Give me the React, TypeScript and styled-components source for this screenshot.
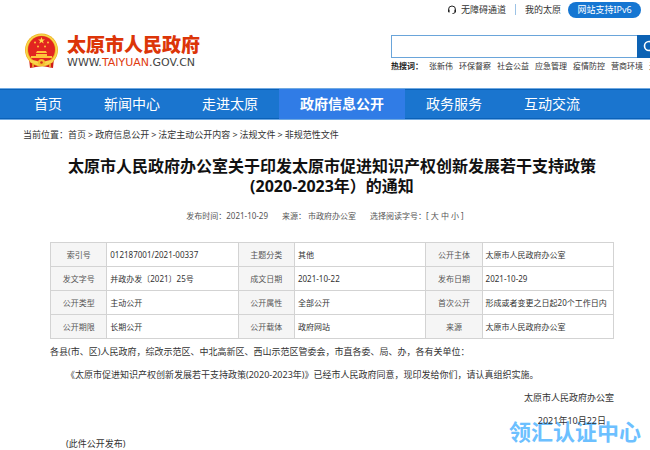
import React from "react";
import styled, { createGlobalStyle } from "styled-components";

const Global = createGlobalStyle`
  * { box-sizing: border-box; }
  body {
    margin: 0;
    background: #fff;
    color: #333;
    font-family: "Noto Sans", "Noto Sans CJK SC", sans-serif;
    font-size: 9px;
    overflow: hidden;
  }
  a { color: inherit; text-decoration: none; }
`;

const Page = styled.div`
  position: relative;
  isolation: isolate;
  overflow: hidden;
  min-height: 100vh;
`;

const TopBar = styled.div`
  display: flex;
  justify-content: flex-end;
  align-items: center;
  height: 18px;
  padding: 1px 9px 0 0;
`;

const TopLink = styled.a`
  display: flex;
  align-items: center;
  gap: 4px;
  line-height: 16px;
`;

const Divider = styled.span`
  width: 1px;
  height: 11px;
  margin: 0 9px;
  background: #9cc3e6;
`;

const Pill = styled.a`
  margin-left: 7px;
  width: 73px;
  border-radius: 8px;
  background: #1576d2;
  text-align: center;
  line-height: 16px;
  && { color: #fff; }
`;

const Header = styled.header`
  display: flex;
  justify-content: space-between;
  height: 70px;
  padding: 15px 0 0 23px;
`;

const Brand = styled.a`
  display: flex;
  align-items: flex-start;
  gap: 7px;
`;

const BrandName = styled.div`
  color: #dc3508;
  font-size: 19px;
  font-weight: 900;
  line-height: 24px;
  white-space: nowrap;
`;

const BrandUrl = styled.div`
  color: #444;
  font-family: "DejaVu Sans", sans-serif;
  font-size: 11px;
  line-height: 11px;
`;

const Red = styled.span`
  color: #e03a10;
`;

const SearchArea = styled.div`
  width: 284px;
  margin: 2px -25px 0 0;
  flex: none;
`;

const SearchForm = styled.form`
  display: flex;
  height: 23px;
`;

const SearchInput = styled.input`
  flex: 1;
  min-width: 0;
  padding: 0 8px;
  border: 1px solid #6aa5da;
  border-right: 0;
  border-radius: 0;
  appearance: none;
  background: #fff;
  outline: 0;
  font: inherit;
`;

const SearchButton = styled.button`
  width: 38px;
  padding: 0 0 0 6px;
  border: 0;
  background: #0c62b4;
  text-align: left;
  line-height: 0;
`;

const HotWords = styled.div`
  display: flex;
  gap: 6px;
  font-size: 8px;
  line-height: 16px;
  white-space: nowrap;
`;

const HotLabel = styled.strong`
  color: #222;
  width: 32px;
`;

const Nav = styled.nav`
  display: flex;
  height: 32px;
  padding-left: 13px;
  border-top: 1px solid #6fa9e2;
  border-bottom: 1px solid #6fa9e2;
  background: #1a75cf;
  box-shadow: inset 0 1px #0a61b8, inset 0 -1px #0a61b8;
`;

const NavLink = styled.a<{ $active?: boolean }>`
  padding: 0 21px;
  font-size: 14px;
  line-height: 30px;
  font-weight: ${(p) => (p.$active ? 700 : 400)};
  background: ${(p) => (p.$active ? "#307ce6" : "transparent")};
  && { color: #fff; }
`;

const Crumbs = styled.nav`
  display: flex;
  padding-left: 23px;
  line-height: 30px;
  white-space: nowrap;
`;

const CrumbArrow = styled.span`
  padding: 0 2px;
`;

const Main = styled.main`
  padding: 6px 36px 0 50px;
`;

const Title = styled.h1`
  margin: 0 -18px;
  color: #111;
  font-size: 16px;
  line-height: 20px;
  text-align: center;
`;

const Meta = styled.div`
  display: flex;
  justify-content: center;
  gap: 14px;
  padding: 12px 14px 0 0;
  color: #555;
  font-size: 8px;
  line-height: 16px;
`;

const SizeButton = styled.button`
  padding: 0;
  border: 0;
  background: none;
  color: inherit;
  font: inherit;
`;

const InfoTable = styled.table`
  width: 100%;
  margin-top: 18px;
  border-collapse: collapse;
  table-layout: fixed;
  font-size: 8px;
  line-height: 16px;
`;

const LabelCell = styled.th`
  width: 10%;
  height: 24px;
  padding: 0;
  border: 1px solid #d3d3d3;
  background: #f5f5f5;
  color: #555;
  font-weight: 400;
`;

const ValueCell = styled.td`
  padding: 0 3px;
  border: 1px solid #d3d3d3;
  white-space: nowrap;
`;

const Article = styled.article`
  padding-top: 1px;
`;

const Paragraph = styled.p<{ $indent?: boolean }>`
  margin: 0;
  padding-left: ${(p) => (p.$indent ? 16 : 0)}px;
  line-height: 23px;
`;

const Signature = styled.p<{ $inset?: boolean }>`
  margin: 0;
  padding-right: ${(p) => (p.$inset ? 8 : 0)}px;
  line-height: 23px;
  text-align: right;
`;

const Watermark = styled.div`
  position: absolute;
  z-index: -1;
  right: 9px;
  top: 417px;
  color: #6cc0ff;
  font-size: 22px;
  font-weight: 700;
  line-height: 28px;
`;

const Emblem = () => (
  <svg width="37" height="36" viewBox="0 0 37 36" aria-hidden="true">
    <path d="M6 25h25l-1 10-11-2-12 2z" fill="#cf1b17" />
    <circle cx="18.500" cy="17" r="16.500" fill="#efb323" />
    <circle cx="18.500" cy="17" r="15" fill="none" stroke="#f8d64c" strokeWidth="1.500" />
    <circle cx="18.500" cy="16.500" r="13.500" fill="#e22420" />
    <path d="m18.500 4 .9 2.500h2.600l-2.100 1.600.8 2.500-2.200-1.500-2.200 1.500.8-2.500L15 6.500h2.600z" fill="#ffd84a" />
    <g fill="#ffc43b">
      <circle cx="12" cy="9.500" r="1" />
      <circle cx="25" cy="9.500" r="1" />
      <circle cx="15" cy="13.500" r="1" />
      <circle cx="22" cy="13.500" r="1" />
      <path d="M14 18h9l1 2h-11zM13 21h11v2h5v2H8v-2h5z" />
    </g>
    <path d="M7 28c4-2 7 1 11.500 1S26 26 30 28l-1 2c-4-1-6 1-10.500 1S12 29 8 30z" fill="#f8d64c" />
    <circle cx="18.500" cy="29.500" r="3.500" fill="#f3bd2d" />
    <circle cx="18.500" cy="29.500" r="1.300" fill="#d92a1b" />
    <path d="M10 31v3M27 31v3" stroke="#f3bd2d" strokeWidth="1.500" />
  </svg>
);

const Headset = () => (
  <svg width="10" height="10" viewBox="0 0 10 10" aria-hidden="true">
    <path d="M1.500 5.500V4.500a3.500 3.500 0 0 1 7 0v1.500c0 1.500-1 2.500-3 2.500" fill="none" stroke="#222" strokeWidth="1" />
    <path d="M1 4.500h1.600v3H1.800L1 6.800zM7.400 4.500H9v2.300l-.8.700h-.8z" fill="#222" />
  </svg>
);

const navItems = ["首页", "新闻中心", "走进太原", "政府信息公开", "政务服务", "互动交流"];
const crumbs = ["首页", "政府信息公开", "法定主动公开内容", "法规文件", "非规范性文件"];
const hotWords = ["张新伟", "环保督察", "社会公益", "应急管理", "疫情防控", "营商环境", "无障碍"];
const rows = [
  [["索引号", "012187001/2021-00337"], ["主题分类", "其他"], ["公开主体", "太原市人民政府办公室"]],
  [["发文字号", "并政办发〔2021〕25号"], ["成文日期", "2021-10-22"], ["发布日期", "2021-10-29"]],
  [["公开类型", "主动公开"], ["公开属性", "全部公开"], ["首次公开", "形成或者变更之日起20个工作日内"]],
  [["公开期限", "长期公开"], ["公开载体", "政府网站"], ["来源", "太原市人民政府办公室"]],
];

export default function App() {
  return (
    <Page>
      <Global />
      <TopBar>
        <TopLink href="#"><Headset />无障碍通道</TopLink>
        <Divider />
        <TopLink href="#">我的太原</TopLink>
        <Pill href="#">网站支持IPv6</Pill>
      </TopBar>
      <Header>
        <Brand href="#">
          <Emblem />
          <div>
            <BrandName>太原市人民政府</BrandName>
            <BrandUrl>WWW.<Red>TAIYUAN</Red>.GOV.CN</BrandUrl>
          </div>
        </Brand>
        <SearchArea>
          <SearchForm onSubmit={(e) => e.preventDefault()}>
            <SearchInput type="search" aria-label="搜索" />
            <SearchButton aria-label="搜索">
              <svg width="14" height="14" viewBox="0 0 14 14">
                <circle cx="6" cy="6" r="4.500" fill="none" stroke="#fff" strokeWidth="1.600" />
                <path d="m9.500 9.500 3.500 3.500" stroke="#fff" strokeWidth="1.600" />
              </svg>
            </SearchButton>
          </SearchForm>
          <HotWords>
            <HotLabel>热搜词：</HotLabel>
            {hotWords.map((w) => <a href="#" key={w}>{w}</a>)}
          </HotWords>
        </SearchArea>
      </Header>
      <Nav>
        {navItems.map((n) => (
          <NavLink href="#" key={n} $active={n === "政府信息公开"}>{n}</NavLink>
        ))}
      </Nav>
      <Crumbs>
        <span>当前位置：</span>
        {crumbs.map((c, i) => (
          <React.Fragment key={c}>
            {i > 0 && <CrumbArrow>&gt;</CrumbArrow>}
            <a href="#">{c}</a>
          </React.Fragment>
        ))}
      </Crumbs>
      <Main>
        <Title>
          太原市人民政府办公室关于印发太原市促进知识产权创新发展若干支持政策
          <br />
          (2020-2023年）的通知
        </Title>
        <Meta>
          <span>发布时间：2021-10-29</span>
          <span>来源： 市政府办公室</span>
          <span>
            选择阅读字号：[ <SizeButton>大</SizeButton> <SizeButton>中</SizeButton> <SizeButton>小</SizeButton> ]
          </span>
        </Meta>
        <InfoTable>
          <tbody>
            {rows.map((row) => (
              <tr key={row[0][0]}>
                {row.map(([label, value]) => (
                  <React.Fragment key={label}>
                    <LabelCell scope="row">{label}</LabelCell>
                    <ValueCell>{value}</ValueCell>
                  </React.Fragment>
                ))}
              </tr>
            ))}
          </tbody>
        </InfoTable>
        <Article>
          <Paragraph>各县(市、区)人民政府，综改示范区、中北高新区、西山示范区管委会，市直各委、局、办，各有关单位：</Paragraph>
          <Paragraph $indent>《太原市促进知识产权创新发展若干支持政策(2020-2023年)》已经市人民政府同意，现印发给你们，请认真组织实施。</Paragraph>
          <Signature>太原市人民政府办公室</Signature>
          <Signature $inset>2021年10月22日</Signature>
          <Paragraph $indent>(此件公开发布)</Paragraph>
        </Article>
      </Main>
      <Watermark>领汇认证中心</Watermark>
    </Page>
  );
}
